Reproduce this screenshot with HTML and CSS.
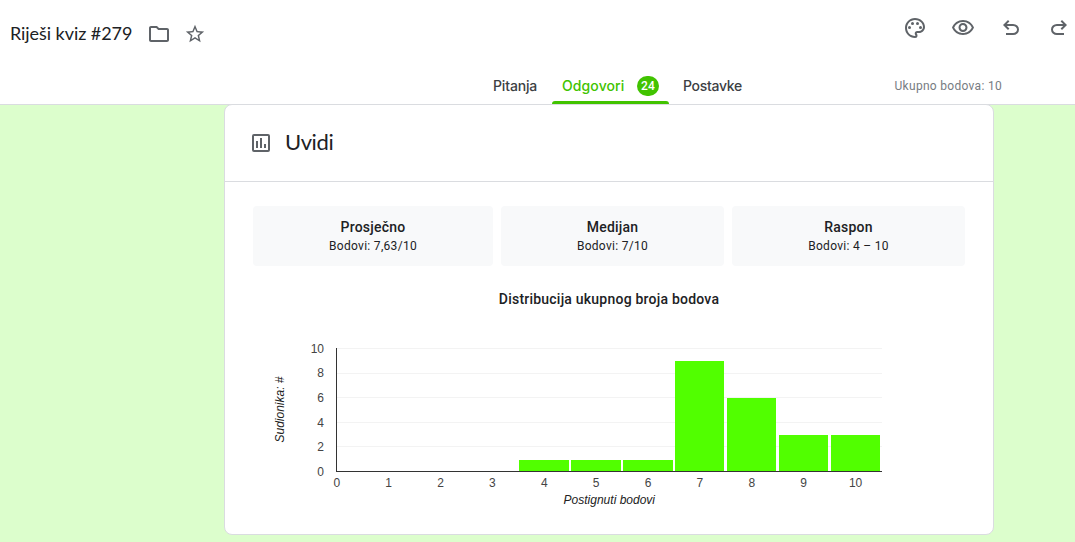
FILE: index.html
```html
<!DOCTYPE html>
<html lang="hr">
<head>
<meta charset="utf-8">
<title>Riješi kviz #279</title>
<link rel="stylesheet" href="styles.css">
</head>
<body>
<header class="header">
  <div class="toolbar">
    <div class="doc">
      <h1 class="doc-title">Riješi kviz #279</h1>
      <svg class="icon folder" viewBox="0 0 24 24"><path d="M9.17 6l2 2H20v10H4V6h5.17M10 4H4c-1.1 0-1.99.9-1.99 2L2 18c0 1.1.9 2 2 2h16c1.1 0 2-.9 2-2V8c0-1.1-.9-2-2-2h-8l-2-2z"/></svg>
      <svg class="icon star" viewBox="0 0 24 24"><path d="M22 9.24l-7.19-.62L12 2 9.19 8.63 2 9.24l5.46 4.73L5.82 21 12 17.27 18.18 21l-1.63-7.03L22 9.24zM12 15.4l-3.76 2.27 1-4.28-3.32-2.88 4.38-.38L12 6.1l1.71 4.04 4.38.38-3.32 2.88 1 4.28L12 15.4z"/></svg>
    </div>
    <div class="actions">
      <svg class="icon" viewBox="0 0 24 24"><path d="M12 22C6.49 22 2 17.51 2 12S6.49 2 12 2s10 4.04 10 9c0 3.31-2.69 6-6 6h-1.77c-.28 0-.5.22-.5.5 0 .12.05.23.13.33.41.47.64 1.06.64 1.67A2.5 2.5 0 0 1 12 22zm0-18c-4.41 0-8 3.59-8 8s3.59 8 8 8c.28 0 .5-.22.5-.5a.54.54 0 0 0-.14-.35c-.41-.46-.63-1.05-.63-1.65a2.5 2.5 0 0 1 2.5-2.5H16c2.21 0 4-1.79 4-4 0-3.86-3.59-7-8-7z"/><circle cx="6.5" cy="11.5" r="1.5"/><circle cx="9.5" cy="7.5" r="1.5"/><circle cx="14.5" cy="7.5" r="1.5"/><circle cx="17.5" cy="11.5" r="1.5"/></svg>
      <svg class="icon" viewBox="0 0 24 24"><path d="M12 6a9.77 9.77 0 0 1 8.82 5.5C19.17 14.87 15.79 17 12 17s-7.17-2.13-8.82-5.5A9.77 9.77 0 0 1 12 6m0-2C7 4 2.73 7.11 1 11.5 2.73 15.89 7 19 12 19s9.27-3.11 11-7.5C21.27 7.11 17 4 12 4zm0 5a2.5 2.5 0 0 1 0 5 2.5 2.5 0 0 1 0-5m0-2c-2.48 0-4.5 2.02-4.5 4.5S9.52 16 12 16s4.5-2.02 4.5-4.5S14.48 7 12 7z"/></svg>
      <svg class="icon" viewBox="0 0 24 24"><path d="M7 19v-2h7.1q1.575 0 2.738-1T18 13.5 16.838 11 14.1 10H7.8l2.6 2.6L9 14 4 9l5-5 1.4 1.4L7.8 8h6.3q2.425 0 4.163 1.575T20 13.5t-1.737 3.925T14.1 19z"/></svg>
      <svg class="icon" viewBox="0 0 24 24"><path d="M9.9 19q-2.425 0-4.163-1.575T4 13.5t1.737-3.925T9.9 8h6.3l-2.6-2.6L15 4l5 5-5 5-1.4-1.4 2.6-2.6H9.9q-1.575 0-2.738 1T6 13.5 7.162 16 9.9 17H17v2z"/></svg>
    </div>
  </div>
  <nav class="nav">
    <span></span>
    <div class="tabs">
      <a class="tab questions">Pitanja</a>
      <a class="tab active"><span class="answers">Odgovori</span><span class="badge">24</span></a>
      <a class="tab settings">Postavke</a>
    </div>
    <span class="total">Ukupno bodova: 10</span>
  </nav>
</header>
<main class="card">
  <div class="card-head">
    <svg class="insights" viewBox="0 0 18 18"><rect x="1" y="1" width="16" height="16" rx="1"/><path d="M5 14V7M9 14V4M13 14v-4"/></svg>
    <h2 class="card-title">Uvidi</h2>
  </div>
  <div class="stats">
    <div class="stat"><b>Prosječno</b><span>Bodovi: 7,63/10</span></div>
    <div class="stat"><b>Medijan</b><span>Bodovi: 7/10</span></div>
    <div class="stat"><b>Raspon</b><span>Bodovi: 4 – 10</span></div>
  </div>
  <h3 class="chart-title">Distribucija ukupnog broja bodova</h3>
  <svg class="chart" viewBox="253 324 712 200">
    <g class="grid">
      <rect x="337" y="348" width="545" height="1"/><rect x="337" y="373" width="545" height="1"/><rect x="337" y="397" width="545" height="1"/><rect x="337" y="422" width="545" height="1"/><rect x="337" y="446" width="545" height="1"/>
    </g>
    <g class="bars">
      <rect x="519" y="460" width="50" height="11"/><rect x="571" y="460" width="50" height="11"/><rect x="623" y="460" width="50" height="11"/><rect x="675" y="361" width="49" height="110"/><rect x="727" y="398" width="49" height="73"/><rect x="779" y="435" width="49" height="36"/><rect x="831" y="435" width="49" height="36"/>
    </g>
    <g class="axis"><rect x="336" y="348" width="1" height="124"/><rect x="336" y="471" width="546" height="1"/></g>
    <g class="labels end">
      <text x="324" y="353">10</text><text x="324" y="377">8</text><text x="324" y="402">6</text><text x="324" y="427">4</text><text x="324" y="451">2</text><text x="324" y="476">0</text>
    </g>
    <g class="labels">
      <text x="336.8" y="487">0</text><text x="388.7" y="487">1</text><text x="440.6" y="487">2</text><text x="492.4" y="487">3</text><text x="544.3" y="487">4</text><text x="596.2" y="487">5</text><text x="648" y="487">6</text><text x="699.9" y="487">7</text><text x="751.8" y="487">8</text><text x="803.7" y="487">9</text><text x="855.6" y="487">10</text>
    </g>
    <g class="labels axis-title">
      <text x="609.3" y="504">Postignuti bodovi</text>
      <text transform="translate(284 409.5) rotate(-90)">Sudionika: #</text>
    </g>
  </svg>
</main>
</body>
</html>
```

FILE: styles.css
```css
* { box-sizing: border-box; }
body {
  margin: 0;
  height: 542px;
  overflow: hidden;
  background: #dcfecc;
  font-family: Roboto, "Liberation Sans", sans-serif;
  color: #202124;
}
h1, h2, h3 { margin: 0; font-weight: 400; }
.header {
  height: 105px;
  background: #fff;
  border-bottom: 1px solid #dadce0;
}
.toolbar {
  height: 68px;
  display: flex;
  justify-content: space-between;
  padding-left: 10px;
}
.doc { display: flex; align-items: center; }
.doc-title {
  width: 137px;
  padding-bottom: 2px;
  font: 400 18px/24px Lato, sans-serif;
  letter-spacing: -0.06px;
  white-space: nowrap;
}
.icon { width: 24px; height: 24px; fill: #5f6368; flex: none; }
.star { width: 22px; height: 22px; margin-left: 13px; }
.actions { display: flex; gap: 24px; padding: 16px 4px 0 0; }
.nav {
  height: 36px;
  display: grid;
  grid-template-columns: 478px 416.5px 1fr;
  align-items: stretch;
}
.tabs { display: flex; }
.tab {
  font: 500 14px/36px Inter, sans-serif;
  letter-spacing: -0.15px;
  color: #3c4043;
  white-space: nowrap;
}
.questions { width: 74px; padding-left: 15px; }
.active {
  display: flex;
  align-items: center;
  width: 117px;
  padding-left: 10px;
  color: #41c300;
  letter-spacing: 0.1px;
  position: relative;
}
.active::after {
  content: "";
  position: absolute;
  inset: auto 0 0;
  height: 3px;
  border-radius: 3px 3px 0 0;
  background: #41c300;
}
.answers { width: 75px; }
.badge {
  width: 22px;
  height: 20px;
  border-radius: 10px;
  background: #41c300;
  color: #fff;
  font: 500 12px/20px Roboto, sans-serif;
  letter-spacing: 0.3px;
  text-align: center;
}
.settings { padding-left: 14px; letter-spacing: -0.3px; }
.total {
  font-size: 12px;
  line-height: 36px;
  letter-spacing: 0.3px;
  color: #777c82;
}
.card {
  width: 770px;
  height: 431px;
  margin: -1px 0 0 224px;
  background: #fff;
  border: 1px solid #dadce0;
  border-radius: 8px;
  position: relative;
}
.card-head {
  height: 77px;
  display: flex;
  align-items: center;
  padding-left: 27px;
  border-bottom: 1px solid #dadce0;
}
.insights { width: 18px; height: 18px; fill: none; stroke: #5f6368; stroke-width: 2; }
.card-title { margin-left: 15px; padding-bottom: 2px; font: 400 22px/28px Lato, sans-serif; letter-spacing: -0.4px; }
.stats {
  display: grid;
  grid-template-columns: 240px 223px 233px;
  gap: 8px;
  padding: 24px 0 0 28px;
}
.stat {
  height: 60px;
  display: flex;
  flex-direction: column;
  align-items: center;
  padding-top: 11px;
  border-radius: 4px;
  background: #f8f9fa;
}
.stat b { font-weight: 500; font-size: 14px; line-height: 20px; letter-spacing: 0.22px; }
.stat span { font-size: 12px; line-height: 18px; letter-spacing: 0.3px; }
.chart-title {
  margin-top: 23px;
  font-size: 14px;
  font-weight: 500;
  line-height: 20px;
  letter-spacing: 0.22px;
  text-align: center;
}
.chart { display: block; width: 712px; height: 200px; margin: 15px 0 0 28px; }
.grid { fill: #f3f3f3; }
.bars { fill: #51ff00; }
.axis { fill: #333; }
.labels { font: 12px "Liberation Sans", Arial, sans-serif; fill: #444; text-anchor: middle; }
.end { text-anchor: end; }
.axis-title { fill: #222; font-style: italic; }
```
